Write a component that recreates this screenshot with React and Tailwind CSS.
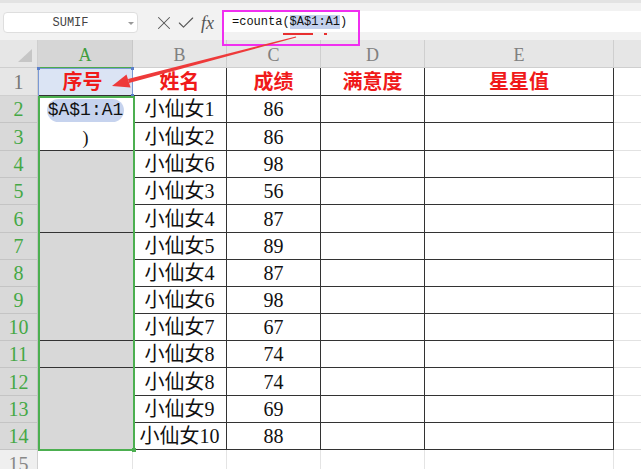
import React from 'react';
import { X, Check } from 'lucide-react';

const serif = { fontFamily: '"Liberation Serif", "Noto Sans CJK SC", serif' };

// row data for rows 2..14
const rows = [
  { name: '小仙女1', score: 86 },
  { name: '小仙女2', score: 86 },
  { name: '小仙女6', score: 98 },
  { name: '小仙女3', score: 56 },
  { name: '小仙女4', score: 87 },
  { name: '小仙女5', score: 89 },
  { name: '小仙女4', score: 87 },
  { name: '小仙女6', score: 98 },
  { name: '小仙女7', score: 67 },
  { name: '小仙女8', score: 74 },
  { name: '小仙女8', score: 74 },
  { name: '小仙女9', score: 69 },
  { name: '小仙女10', score: 88 },
];

const heights = [28, 27, 28, 27, 27, 28, 27, 27, 27, 27, 27, 28, 27, 27];
// rows after which the merged column A draws a line
const mergeEnds = [3, 6, 10, 11];

const FormulaBar = () => (
  <div className="relative h-[40px] bg-[#f2f2f2] border-t-[3px] border-[#e3e3e3] flex items-start pt-[9px]">
    <div className="ml-[3px] w-[135px] h-[21px] bg-white border border-[#dedede] rounded-[4px] relative flex items-center justify-center">
      <span className="text-[12px] text-[#444]" style={{ fontFamily: '"Liberation Mono", monospace' }}>SUMIF</span>
      <span className="absolute right-[3px] top-[9px] w-0 h-0 border-l-[3px] border-r-[3px] border-t-[3px] border-l-transparent border-r-transparent border-t-[#999]"></span>
    </div>
    <div className="w-[84px] h-[21px] flex items-center text-[#555]">
      <X size={22} strokeWidth={1.1} className="ml-[15px]" />
      <Check size={20} strokeWidth={1.3} className="ml-[1px]" />
      <span className="ml-[5px] text-[18px] italic leading-none" style={{ fontFamily: '"Liberation Serif", serif' }}>fx</span>
    </div>
    <div className="flex-1 h-[21px] bg-white flex items-center pl-[10px] -mt-[1px]">
      <span className="text-[12px] text-[#111] whitespace-pre" style={{ fontFamily: '"Liberation Mono", monospace' }}>
        =counta(<span className="bg-[#c3d1ee]">$A$1:A1</span>)
      </span>
    </div>
  </div>
);

const HeaderRow = () => (
  <div className="flex h-[28px]" style={serif}>
    <div className="w-[38px] shrink-0 bg-[#e6e6e6] border-r border-b border-[#cfcfcf] relative">
      <svg width="38" height="28" className="absolute left-0 top-0">
        <polygon points="32,9 32,22 18,22" fill="#c6c6c6" />
      </svg>
    </div>
    <div className="w-[95px] shrink-0 bg-[#d6d6d6] border-r border-[#c8c8c8] border-b border-b-[#4caa4c] flex items-center justify-center pt-[4px] text-[18px] text-[#3e9e3e]">A</div>
    <div className="w-[94px] shrink-0 bg-[#e6e6e6] border-r border-b border-[#cfcfcf] flex items-center justify-center pt-[4px] text-[18px] text-[#808080]">B</div>
    <div className="w-[94px] shrink-0 bg-[#e6e6e6] border-r border-b border-[#cfcfcf] flex items-center justify-center pt-[4px] text-[18px] text-[#808080]">C</div>
    <div className="w-[104px] shrink-0 bg-[#e6e6e6] border-r border-b border-[#cfcfcf] flex items-center justify-center pt-[4px] text-[18px] text-[#808080]">D</div>
    <div className="w-[189px] shrink-0 bg-[#e6e6e6] border-r border-b border-[#cfcfcf] flex items-center justify-center pt-[4px] text-[18px] text-[#808080]">E</div>
    <div className="flex-1 bg-[#e6e6e6] border-b border-[#cfcfcf]"></div>
  </div>
);

const Cell = ({ w, children, className = '' }) => (
  <div className={`${w} shrink-0 border-r border-b border-[#333] flex items-center justify-center text-[20px] leading-none ${className}`}>
    {children}
  </div>
);

const TitleRow = () => (
  <div className="flex h-[28px]" style={serif}>
    <div className="w-[38px] shrink-0 bg-[#e6e6e6] border-r border-b border-[#cfcfcf] flex items-center justify-center text-[20px] text-[#777]">1</div>
    <div className="w-[95px] shrink-0 bg-[#dbe4f4] border-b border-[#333] flex items-center justify-center text-[20px] font-bold text-[#f01a1a] pr-[6px]">序号</div>
    <Cell w="w-[94px]" className="font-bold text-[#f01a1a]">姓名</Cell>
    <Cell w="w-[94px]" className="font-bold text-[#f01a1a]">成绩</Cell>
    <Cell w="w-[104px]" className="font-bold text-[#f01a1a]">满意度</Cell>
    <Cell w="w-[189px]" className="font-bold text-[#f01a1a]">星星值</Cell>
    <div className="flex-1 border-b border-[#e2e2e2]"></div>
  </div>
);

const DataRow = ({ n, row, h }) => {
  const merged = mergeEnds.includes(n) ? 'border-b border-[#333]' : '';
  let aCell;
  if (n === 2) {
    aCell = (
      <div className="w-[95px] shrink-0 bg-white flex items-end justify-center pb-[1px]">
        <span className="bg-[#c6d3ee] rounded-full px-[1px] py-[1px] text-[18px] text-[#111] leading-[21px]" style={{ fontFamily: '"Liberation Mono", monospace' }}>$A$1:A1</span>
      </div>
    );
  } else if (n === 3) {
    aCell = (
      <div className={`w-[95px] shrink-0 bg-white flex items-start justify-center pt-[2px] text-[18px] text-[#111] ${merged}`}>)</div>
    );
  } else {
    aCell = <div className={`w-[95px] shrink-0 bg-[#d8d8d8] ${merged}`}></div>;
  }
  return (
    <div className={`flex ${h === 28 ? 'h-[28px]' : 'h-[27px]'}`} style={serif}>
      <div className="w-[38px] shrink-0 bg-[#d9d9d9] border-r border-b border-[#c4c4c4] flex items-center justify-center text-[20px] text-[#45a845]">{n}</div>
      {aCell}
      <Cell w="w-[94px]" className="text-[#111]">{row.name}</Cell>
      <Cell w="w-[94px]" className="text-[#111]">{row.score}</Cell>
      <Cell w="w-[104px]"></Cell>
      <Cell w="w-[189px]"></Cell>
      <div className="flex-1 border-b border-[#e2e2e2]"></div>
    </div>
  );
};

const LastRow = () => (
  <div className="flex h-[19px]" style={serif}>
    <div className="w-[38px] shrink-0 bg-[#efefef] border-r border-[#d0d0d0] flex items-start justify-center pt-[4px] text-[20px] text-[#888] leading-none">15</div>
    <div className="w-[95px] shrink-0 border-r border-[#e4e4e4]"></div>
    <div className="w-[94px] shrink-0 border-r border-[#e4e4e4]"></div>
    <div className="w-[94px] shrink-0 border-r border-[#e4e4e4]"></div>
    <div className="w-[104px] shrink-0 border-r border-[#e4e4e4]"></div>
    <div className="w-[189px] shrink-0 border-r border-[#e4e4e4]"></div>
    <div className="flex-1"></div>
  </div>
);

export default function App() {
  return (
    <div className="relative w-[641px] h-[469px] overflow-hidden bg-white">
      <FormulaBar />
      <HeaderRow />
      <TitleRow />
      {rows.map((row, i) => (
        <DataRow key={i} n={i + 2} row={row} h={heights[i + 1]} />
      ))}
      <LastRow />

      {/* A1 active cell frame */}
      <div className="absolute left-[38px] top-[68px] w-[95px] h-[29px] border border-[#7b99d4] pointer-events-none"></div>
      <div className="absolute left-[37px] top-[67px] w-[3px] h-[3px] bg-[#5b7fc9]"></div>
      <div className="absolute left-[131px] top-[67px] w-[3px] h-[3px] bg-[#5b7fc9]"></div>
      <div className="absolute left-[131px] top-[94px] w-[3px] h-[3px] bg-[#5b7fc9]"></div>

      {/* A2:A14 selection */}
      <div className="absolute left-[38px] top-[96px] w-[97px] h-[355px] border-2 border-[#4caf50] pointer-events-none"></div>
      <div className="absolute left-[132px] top-[448px] w-[4px] h-[4px] bg-[#4caf50]"></div>

      {/* annotation: magenta box, underline, arrow */}
      <div className="absolute left-[222px] top-[10px] w-[138px] h-[36px] border-2 border-[#f02ff0] pointer-events-none"></div>
      <div className="absolute left-[283px] top-[33px] w-[30px] h-[2px] bg-[#e83030]"></div>
      <div className="absolute left-[324px] top-[33px] w-[3px] h-[2px] bg-[#e83030]"></div>
      <svg className="absolute left-0 top-0 pointer-events-none" width="641" height="469">
        <polygon points="295.9,36.4 296.2,37.6 129.0,82.9 128.0,79.0" fill="#ee3a3a" />
        <polygon points="112,86 130.5,87.5 126.5,74.5" fill="#ee3a3a" />
      </svg>
    </div>
  );
}
